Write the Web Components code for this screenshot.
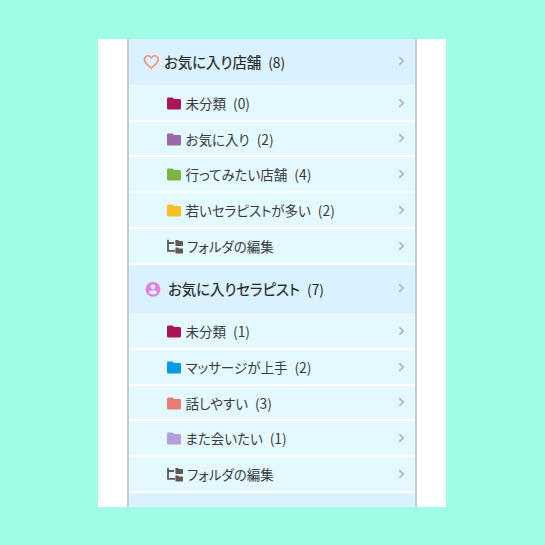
<!DOCTYPE html>
<html lang="ja">
<head>
<meta charset="utf-8">
<title>お気に入り</title>
<style>
	body {
		margin: 0;
		width: 545px;
		height: 545px;
		overflow: hidden;
		background: #9ffde5;
		font-family: "Noto Sans CJK JP", "Noto Sans", sans-serif;
	}
</style>
</head>
<body>
<favorite-panel>
	<favorite-header icon="heart" count="(8)" style="--height: 47px; --left: 14px; --gap: 5px">お気に入り店舗</favorite-header>
	<favorite-row color="#ad1457" count="(0)">未分類</favorite-row>
	<favorite-row color="#9b68ad" count="(2)" style="--height: 35px">お気に入り</favorite-row>
	<favorite-row color="#7cb342" count="(4)">行ってみたい店舗</favorite-row>
	<favorite-row color="#f6bf26" count="(2)">若いセラピストが多い</favorite-row>
	<favorite-row icon="tree">フォルダの編集</favorite-row>
	<favorite-header icon="person" count="(7)">お気に入りセラピスト</favorite-header>
	<favorite-row color="#ad1457" count="(1)">未分類</favorite-row>
	<favorite-row color="#039be5" count="(2)">マッサージが上手</favorite-row>
	<favorite-row color="#e67c73" count="(3)" style="--height: 35px">話しやすい</favorite-row>
	<favorite-row color="#b39ddb" count="(1)">また会いたい</favorite-row>
	<favorite-row icon="tree">フォルダの編集</favorite-row>
</favorite-panel>

<script>
const icons = {
	heart: `<svg width="16" height="16" viewBox="0 0 16 16"><path d="M8.3 14.1C3.7 10.4 1.4 8.3 1.4 5.4A3.6 3.6 0 0 1 5 1.8C6.5 1.8 7.6 2.6 8.3 3.9C9 2.6 10.1 1.8 11.6 1.8A3.6 3.6 0 0 1 15.2 5.4C15.2 8.3 12.9 10.4 8.3 14.1Z" fill="none" stroke="#ff8a78" stroke-width="1.6" stroke-linejoin="round"/></svg>`,
	person: `<svg width="16" height="16" viewBox="0 0 16 16"><circle cx="8" cy="8.3" r="7.4" fill="#e17fe3"/><circle cx="8" cy="5.8" r="2.4" fill="#daf1ff"/><path d="M3.6 11.6C4.5 9.9 6.2 9.3 8 9.3s3.5.6 4.4 2.3C11.4 12.9 9.8 13.5 8 13.5s-3.4-.6-4.4-1.9z" fill="#daf1ff"/></svg>`,
	folder: `<svg width="14" height="13" viewBox="0 0 14 13"><path d="M1.3.4h4.2l1.6 1.7h5.6q1.3 0 1.3 1.3v7.8q0 1.3-1.3 1.3H1.3Q0 12.5 0 11.2V1.7Q0 .4 1.3.4z" fill="currentColor"/></svg>`,
	tree: `<svg width="16" height="15" viewBox="0 0 16 15"><path d="M1 .8v11h7M1 4h6" fill="none" stroke="#625752" stroke-width="1.8"/><path d="M8.400 .9h2.600l1 1h3.200q.8 0 .8.7v3.600q0 .7-.8.7H9.100q-.7 0-.7-.7zM8.400 8.500h2.600l1 1h3.200q.8 0 .8.7v3.600q0 .7-.8.7H9.100q-.7 0-.7-.7z" fill="#625752"/></svg>`,
	chevron: `<svg class="chevron" width="7" height="10" viewBox="0 0 7 10"><path d="M1.3 1.2 5.2 5 1.3 8.8" fill="none" stroke="#b5bcbd" stroke-width="1.8"/></svg>`
};

class FavoritePanel extends HTMLElement {
	constructor() {
		super();
		this.attachShadow({mode: 'open'}).innerHTML = `
			<style>
			:host {
				display: flex;
				justify-content: center;
				box-sizing: border-box;
				width: 348px;
				height: 468px;
				margin: 39px 0 0 98px;
				padding: 0 29px;
				background: #fff;
			}
			.list {
				display: flex;
				flex-direction: column;
				box-sizing: border-box;
				width: 290px;
				border: solid #c6c8ca;
				border-width: 0 2px;
			}
			.next {
				flex: 1;
				background: #daf1ff;
			}
			</style>
			<div class="list"><slot></slot><div class="next"></div></div>
		`;
	}
}

class FavoriteRow extends HTMLElement {
	constructor() {
		super();
		this.attachShadow({mode: 'open'});
	}

	get css() {
		return `
			:host {
				display: flex;
				align-items: center;
				flex-shrink: 0;
				box-sizing: border-box;
				height: var(--height, 36px);
				padding: 1px 10px 0 38px;
				border-bottom: 2px solid #fff;
				background: #e4f9ff;
				color: #383c3e;
				font-size: 13.8px;
				line-height: 20px;
				white-space: nowrap;
			}
			svg { display: block; flex: none; }
			.label {
				margin: -1px 0 0 4.5px;
				font-size: 13.5px;
				font-feature-settings: "palt";
			}
			.tree { margin-left: 4px; }
			.count { margin: -1px 0 0 7px; }
			.chevron { margin: -2px 0 0 auto; }
		`;
	}

	connectedCallback() {
		const icon = this.getAttribute('icon') || 'folder';
		const count = this.getAttribute('count');
		this.shadowRoot.innerHTML = `
			<style>${this.css}</style>
			<span style="color: ${this.getAttribute('color') || 'inherit'}">${icons[icon]}</span>
			<span class="label ${icon}"><slot></slot></span>
			${count ? `<span class="count">${count}</span>` : ''}
			${icons.chevron}
		`;
	}
}

class FavoriteHeader extends FavoriteRow {
	get css() {
		return `${super.css}
			:host {
				height: var(--height, 49px);
				padding: 0 10px 0 var(--left, 16px);
				border-bottom: 1px solid #f1fbff;
				background: #daf1ff;
				color: #25292b;
			}
			.label {
				margin-left: var(--gap, 7px);
				font-size: 14.4px;
				-webkit-text-stroke: .2px currentColor;
			}
		`;
	}
}

customElements.define('favorite-panel', FavoritePanel);
customElements.define('favorite-row', FavoriteRow);
customElements.define('favorite-header', FavoriteHeader);
</script>
</body>
</html>
